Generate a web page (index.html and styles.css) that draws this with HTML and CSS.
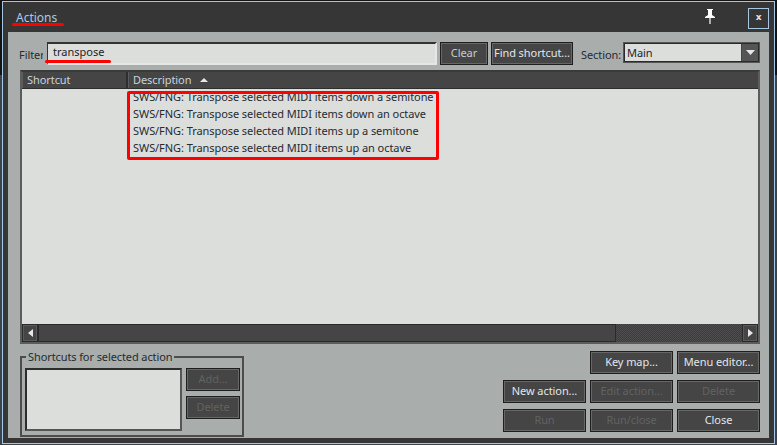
FILE: index.html
```html
<!DOCTYPE html>
<html lang="en">
<head>
<meta charset="utf-8">
<title>Actions</title>
<link rel="stylesheet" href="styles.css">
</head>
<body>
<div class="window">
  <header class="titlebar">
    <span class="title">Actions</span>
    <svg class="pin" width="14" height="16" viewBox="0 0 14 16"><path d="M4 1h6v1H9v5l3 2v1H7.600v6H6.400v-6H2V9l3-2V2H4z" fill="#fff"/></svg>
    <span class="closebox">x</span>
  </header>
  <main class="panel">
    <div class="filter-row">
      <span class="filter-label">Filter</span>
      <div class="field filter-input">transpose</div>
      <div class="btn btn-clear">Clear</div>
      <div class="btn btn-find">Find shortcut...</div>
      <span class="section-label">Section:</span>
      <div class="select">
        <span class="select-value">Main</span>
        <span class="select-btn"><svg width="9" height="5" viewBox="0 0 9 5"><path d="M0 0h9L4.500 5z" fill="#e8e8e8"/></svg></span>
      </div>
    </div>
    <section class="list">
      <div class="list-head">
        <div class="col col-shortcut">Shortcut</div>
        <div class="col col-desc">Description<svg class="sort" width="8" height="4" viewBox="0 0 8 4"><path d="M4 0l4 4H0z" fill="#e8e8e8"/></svg></div>
      </div>
      <div class="list-body">
        <div class="row row-clipped">SWS/FNG: Transpose selected MIDI items down a semitone</div>
        <div class="row">SWS/FNG: Transpose selected MIDI items down an octave</div>
        <div class="row">SWS/FNG: Transpose selected MIDI items up a semitone</div>
        <div class="row">SWS/FNG: Transpose selected MIDI items up an octave</div>
      </div>
      <div class="hscroll">
        <span class="sb-btn"><svg width="5" height="8" viewBox="0 0 5 8"><path d="M5 0v8L0 4z" fill="#e8e8e8"/></svg></span>
        <span class="sb-thumb"></span>
        <span class="sb-track"></span>
        <span class="sb-btn"><svg width="5" height="8" viewBox="0 0 5 8"><path d="M0 0v8l5-4z" fill="#e8e8e8"/></svg></span>
      </div>
    </section>
    <div class="bottom">
      <div class="group">
        <div class="legend">Shortcuts for selected action</div>
        <div class="group-body">
          <div class="field shortcuts-box"></div>
          <div class="group-btns">
            <div class="btn btn-small off">Add...</div>
            <div class="btn btn-small off">Delete</div>
          </div>
        </div>
      </div>
      <div class="actions">
        <div class="btn btn-wide slot-2">Key map...</div>
        <div class="btn btn-wide">Menu editor...</div>
        <div class="btn btn-wide">New action...</div>
        <div class="btn btn-wide off">Edit action...</div>
        <div class="btn btn-wide off">Delete</div>
        <div class="btn btn-wide off">Run</div>
        <div class="btn btn-wide off">Run/close</div>
        <div class="btn btn-wide">Close</div>
      </div>
    </div>
  </main>
</div>
<div class="mark mark-title"></div>
<div class="mark mark-filter"></div>
<div class="mark-box"></div>
</body>
</html>
```
FILE: styles.css
```css
html, body { margin: 0; height: 100%; }
body {
  width: 777px;
  height: 445px;
  overflow: hidden;
  position: relative;
  background: linear-gradient(#141414 0 75px, #39434c 75px);
  font: 11px/15px "Noto Sans", "Open Sans", sans-serif;
  letter-spacing: -.07px;
  color: #262b30;
}
.window {
  box-sizing: border-box;
  width: 773px;
  height: 443px;
  margin: 1px 0 0 2px;
  border: 1px solid #a6c6e2;
  background: #363636;
  display: flex;
  flex-direction: column;
}
.titlebar {
  height: 30px;
  flex: none;
  display: flex;
  align-items: flex-start;
  box-sizing: border-box;
  padding: 5px 5px 0 13px;
}
.title {
  flex: 1;
  font-size: 12px;
  line-height: 18px;
  margin-top: 2px;
  letter-spacing: 0;
  color: #a9c9e6;
}
.pin { margin: 1px 31px 0 0; }
.closebox {
  box-sizing: border-box;
  width: 21px;
  height: 21px;
  margin-top: 1px;
  border: 1px solid #a6c6e2;
  color: #e4e4e4;
  font: bold 9px/17px "DejaVu Sans", sans-serif;
  text-align: center;
}
.panel {
  box-sizing: border-box;
  width: 761px;
  height: 406px;
  margin-left: 5px;
  padding: 10px 9px 0 12px;
  background: #a9aeac;
}
.filter-row {
  display: flex;
  align-items: center;
  height: 23px;
}
.filter-label {
  width: 24px;
  margin-left: -1px;
  margin-right: 4px;
  overflow: hidden;
  white-space: nowrap;
  padding-top: 2px;
}
.field {
  box-sizing: border-box;
  background: #dcdedc;
  border: 2px solid #3c3c3c;
}
.filter-input {
  width: 390px;
  height: 23px;
  padding-left: 5px;
  line-height: 16px;
  border-width: 2px 2px 2px 1px;
  border-color: #333 #e6e6e6 #e6e6e6 #333;
  letter-spacing: 0;
  color: #1e2226;
}
.btn {
  box-sizing: border-box;
  height: 23px;
  background: #454545;
  border: 1px solid #1e1e1e;
  box-shadow: inset 0 0 0 1px #676767;
  color: #e2e6ea;
  line-height: 20px;
  text-align: center;
  white-space: nowrap;
}
.btn.off { color: #626262; }
.btn-clear { width: 48px; margin-left: 3px; color: #c6cccf; }
.btn-find { width: 82px; margin-left: 3px; }
.section-label { margin-left: 8px; width: 43px; white-space: nowrap; padding-top: 2px; }
.select {
  box-sizing: border-box;
  width: 135px;
  height: 19px;
  align-self: flex-start;
  margin-top: 1px;
  display: flex;
  background: #dcdedc;
  border: 1px solid #2a2a2a;
  box-shadow: 0 0 0 1px #555;
}
.select-value { flex: 1; padding-left: 2px; line-height: 17px; color: #1e2226; }
.select-btn {
  width: 16px;
  background: #555;
  border-left: 1px solid #444;
  display: flex;
  align-items: center;
  justify-content: center;
}
.list {
  box-sizing: border-box;
  height: 274px;
  margin-top: 5px;
  display: flex;
  flex-direction: column;
  background: #454545;
  border: 2px solid #5c5c5c;
  border-top-color: #3a3a3a;
}
.list-head { display: flex; height: 16px; flex: none; gap: 2px; background: #2e2e2e; }
.col {
  box-sizing: border-box;
  background: #454545;
  color: #c9d2da;
  line-height: 15px;
  padding-left: 4px;
  border-left: 1px solid #5c5c5c;
}
.col-shortcut { width: 104px; }
.col-desc { flex: 1; }
.sort { margin-left: 9px; vertical-align: 2px; }
.list-body {
  flex: 1;
  background: #dcdedc;
  border-top: 1px solid #2e2e2e;
  padding-left: 111px;
  overflow: hidden;
}
.row {
  height: 17px;
  line-height: 17px;
  white-space: nowrap;
  color: #262b30;
}
.row-clipped { margin-top: -1px; }
.hscroll {
  display: flex;
  height: 18px;
  flex: none;
  background: repeating-conic-gradient(#3d3d3d 0 25%, #4d4d4d 0 50%) 0 0 / 2px 2px;
}
.sb-btn {
  box-sizing: border-box;
  width: 16px;
  background: #454545;
  border: 1px solid #2a2a2a;
  box-shadow: inset 0 0 0 1px #5a5a5a;
  display: flex;
  align-items: center;
  justify-content: center;
}
.sb-thumb {
  box-sizing: border-box;
  width: 578px;
  background: #454545;
  border: 1px solid #2a2a2a;
}
.sb-track { flex: 1; }
.bottom {
  display: flex;
  justify-content: space-between;
  margin-top: 7px;
}
.group {
  box-sizing: border-box;
  width: 224px;
  height: 81px;
  margin-top: 5px;
  border: 2px solid #4c4c4c;
  padding: 10px 2px 0 3px;
  position: relative;
}
.legend {
  position: absolute;
  left: 4px;
  top: -9px;
  padding: 0 2px;
  background: #a9aeac;
  line-height: 15px;
  letter-spacing: -.1px;
  white-space: nowrap;
}
.group-body { display: flex; gap: 4px; }
.shortcuts-box { width: 157px; height: 63px; border-color: #2c2c2c #555 #555 #2c2c2c; }
.group-btns { display: flex; flex-direction: column; gap: 5px; }
.btn-small { width: 54px; }
.actions {
  display: grid;
  grid-template-columns: repeat(3, 83px);
  grid-auto-rows: 23px;
  gap: 6px 4px;
  align-self: flex-start;
}
.btn-wide { width: 83px; }
.slot-2 { grid-column: 2; }
.mark { position: absolute; background: #f00; height: 3px; border-radius: 2px; }
.mark-title { left: 12px; top: 23px; width: 52px; }
.mark-filter { left: 45px; top: 60px; width: 66px; }
.mark-box {
  position: absolute;
  left: 127px;
  top: 91px;
  width: 306px;
  height: 63px;
  border: 3px solid #f00;
  border-radius: 2px;
}
```
